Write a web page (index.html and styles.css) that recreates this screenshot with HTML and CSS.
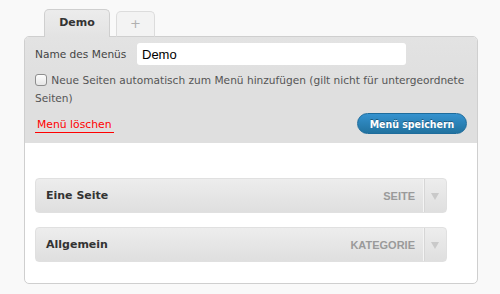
FILE: index.html
```html
<!DOCTYPE html>
<html lang="de">
<head>
<meta charset="utf-8">
<title>Menüs</title>
<link rel="stylesheet" href="styles.css">
</head>
<body>
<div class="menu-editor">
  <div class="tabs">
    <div class="tab tab-active">Demo</div>
    <div class="tab tab-add">+</div>
  </div>
  <div class="panel">
    <div class="panel-header">
      <div class="name-row">
        <label class="name-label" for="menu-name">Name des Menüs</label>
        <input class="name-input" id="menu-name" type="text" value="Demo">
      </div>
      <p class="auto-add"><input class="check" type="checkbox"> Neue Seiten automatisch zum Menü hinzufügen (gilt nicht für untergeordnete Seiten)</p>
      <div class="actions">
        <a class="delete-link">Menü löschen</a>
        <button class="save-button">Menü speichern</button>
      </div>
    </div>
    <div class="panel-body">
      <div class="menu-item">
        <span class="item-title">Eine Seite</span>
        <span class="item-type">Seite</span>
        <span class="item-toggle"><span class="arrow"></span></span>
      </div>
      <div class="menu-item">
        <span class="item-title">Allgemein</span>
        <span class="item-type">Kategorie</span>
        <span class="item-toggle"><span class="arrow"></span></span>
      </div>
    </div>
  </div>
</div>
</body>
</html>
```
FILE: styles.css
```css
html, body {
  margin: 0;
  padding: 0;
  background: #f9f9f9;
}
body {
  font-family: "DejaVu Sans", sans-serif;
  font-size: 10.6px;
  color: #555;
}
.menu-editor {
  width: 454px;
  margin-left: 24px;
  padding-top: 9px;
}
.tabs {
  display: flex;
  align-items: flex-end;
  padding-left: 20px;
  gap: 6px;
  margin-bottom: -1px;
}
.tab {
  position: relative;
  z-index: 1;
  box-sizing: border-box;
  border: 1px solid #cfcfcf;
  border-bottom: none;
  border-radius: 5px 5px 0 0;
  text-align: center;
}
.tab-active {
  width: 66px;
  height: 28px;
  line-height: 26px;
  background: linear-gradient(#ececec, #e3e3e3);
  font-weight: bold;
  font-size: 11px;
  color: #333;
}
.tab-add {
  width: 39px;
  height: 26px;
  line-height: 24px;
  background: #f3f3f3;
  border-color: #dcdcdc;
  border-bottom: 1px solid #cfcfcf;
  color: #b0b0b0;
  font-size: 13px;
  z-index: 0;
}
.panel {
  border: 1px solid #cfcfcf;
  border-radius: 5px;
  background: #fff;
  overflow: hidden;
}
.panel-header {
  background: linear-gradient(#e3e3e3, #dfdfdf 40%);
  padding: 6px 10px 9px 10px;
}
.name-row {
  display: flex;
  align-items: center;
  height: 22px;
}
.name-label {
  width: 102px;
  color: #444;
}
.name-input {
  box-sizing: border-box;
  width: 269px;
  height: 22px;
  border: none;
  border-radius: 3px;
  background: #fff;
  margin: 0;
  padding: 0 0 0 5px;
  font-family: "Liberation Sans", sans-serif;
  font-size: 13px;
  color: #000;
}
.auto-add {
  margin: 6px 0 0 0;
  line-height: 18px;
  color: #555;
}
.check {
  appearance: none;
  -webkit-appearance: none;
  box-sizing: border-box;
  width: 12px;
  height: 12px;
  margin: 0 1px 0 0;
  vertical-align: -2px;
  border: 1px solid #8e8e8e;
  border-radius: 3px;
  background: linear-gradient(#fdfdfd, #e6e6e6);
}
.actions {
  display: flex;
  justify-content: space-between;
  align-items: flex-start;
  margin-top: 6px;
  height: 21px;
}
.delete-link {
  color: #f00;
  padding: 5px 2px 0 2px;
  line-height: 14px;
  border-bottom: 1px solid #f00;
  font-size: 10.8px;
}
.save-button {
  box-sizing: border-box;
  height: 21px;
  width: 110px;
  border: 1px solid #1e6c9c;
  border-radius: 11px;
  background: linear-gradient(#3592cf, #21729f);
  color: #fff;
  font-family: "DejaVu Sans Condensed", "DejaVu Sans", sans-serif;
  font-weight: bold;
  font-size: 10.5px;
  text-shadow: 0 -1px 0 rgba(0, 0, 0, 0.35);
  padding: 0;
  margin: 0;
}
.panel-body {
  padding: 35px 30px 21px 10px;
  display: flex;
  flex-direction: column;
  gap: 14px;
}
.menu-item {
  box-sizing: border-box;
  display: flex;
  align-items: center;
  height: 35px;
  border: 1px solid #e0e0e0;
  border-radius: 4px;
  background: linear-gradient(#ededed, #dfdfdf);
}
.item-title {
  flex: 1;
  padding-left: 10px;
  font-weight: bold;
  font-size: 11px;
  color: #333;
}
.item-type {
  font-family: "Liberation Sans", sans-serif;
  font-weight: bold;
  font-size: 11px;
  text-transform: uppercase;
  color: #9a9a9a;
  margin-right: 8px;
}
.item-toggle {
  display: flex;
  align-items: center;
  justify-content: center;
  width: 22px;
  height: 100%;
  border-left: 1px solid #f4f4f4;
  box-shadow: inset 1px 0 0 #d6d6d6;
}
.arrow {
  width: 0;
  height: 0;
  border-left: 4px solid transparent;
  border-right: 4px solid transparent;
  border-top: 7px solid #c9c9c9;
  margin-top: 2px;
}
```
